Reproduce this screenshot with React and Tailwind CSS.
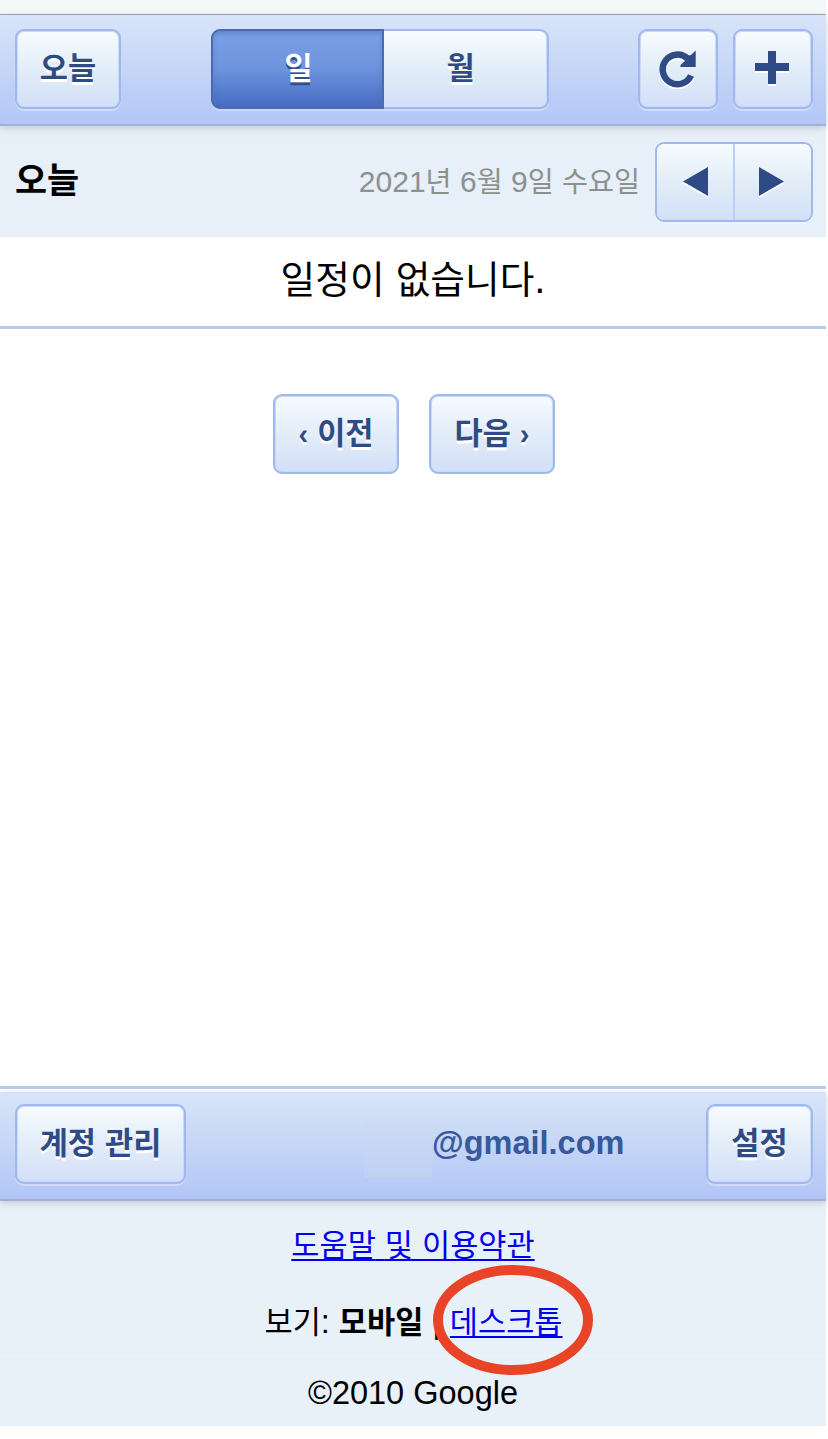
import React from "react";

// Hangul runs are set slightly smaller so they sit evenly beside Latin digits.
function Ko({ children }) {
  return children.split(/([\uac00-\ud7a3]+)/).map((part, i) =>
    /[\uac00-\ud7a3]/.test(part) ? (
      <span key={i} className="text-[0.942em]">{part}</span>
    ) : (
      part
    )
  );
}

const face =
  "flex items-center justify-center bg-linear-to-b from-[#f6fbfe] via-[#e3edf8] to-[#d2dff8]";
const frame =
  "rounded-[9px] border-[2px] border-[#a0b8ee] shadow-[inset_0_0_0_1px_#c9d9f8,0_2px_0_#ffffff55]";
const label =
  "text-[32.5px] leading-[38px] font-bold text-[#2f4b85] whitespace-pre [text-shadow:0_3px_0_#ffffff]";

function Button({ className, children }) {
  return (
    <button className={`${face} ${frame} ${label} h-20 shrink-0 pb-[2px] ${className}`}>
      <span>{children}</span>
    </button>
  );
}

function Bar({ className, children }) {
  return (
    <div
      className={`relative flex border-b-2 border-[#a3b1d9] bg-linear-to-b from-[#d8e4f9] via-[#c5d6f6] to-[#b3c5f7] shadow-[0_2px_7px_#9ba6b080] ${className}`}
    >
      {children}
    </div>
  );
}

export default function App() {
  return (
    <div className="h-[1439px] w-[828px] overflow-hidden bg-white font-['Liberation_Sans','Noto_Sans_CJK_KR',sans-serif] text-black">
      <div className="relative w-[826px]">
        <div className="h-[15px] border-b border-[#92a0b2] bg-[#f3f8f8]" />
        <Bar className="h-[111px] pt-[14px] pl-[15px] pr-[13px]">
          <Button className="w-[106px]"><Ko>오늘</Ko></Button>
          <div className="ml-[90px] flex h-20 w-[338px]">
            <button className="flex w-[173px] items-center justify-center rounded-l-[9px] border-2 border-[#4b6bae] bg-linear-to-b from-[#7ba1e6] via-[#6c93dd] to-[#476bc2] pb-[2px] text-[32.5px] leading-[38px] font-bold text-white shadow-[inset_0_3px_4px_#4e70b488,0_2px_0_#ffffff44] [text-shadow:0_3px_0_#334f8b]">
              <span className="pl-[2px]"><Ko>일</Ko></span>
            </button>
            <button className={`${face} ${label} w-[165px] rounded-r-[9px] border-2 border-l-0 border-[#a0b8ee] pr-[10px] pb-[2px] shadow-[inset_-1px_0_0_#c9d9f8,0_2px_0_#ffffff55]`}>
              <Ko>월</Ko>
            </button>
          </div>
          <Button className="ml-[89px] w-20">
            <svg className="block" width="40" height="42" viewBox="0 0 40 42" fill="none">
              <path d="M33 30.5A14.8 14.8 0 1 1 29.5 13.5" stroke="#fff" strokeWidth="6.5" />
              <path d="M33 28.5A14.8 14.8 0 1 1 29.5 11.5" stroke="#2f4b85" strokeWidth="6.5" />
              <path d="M37.7 3.5V20H22.5V18L27.5 13.5V9.5L33 8Z" fill="#2f4b85" />
            </svg>
          </Button>
          <Button className="ml-[15px] w-20">
            <svg className="mr-[3px] block" width="36" height="38" viewBox="0 0 36 38">
              <path d="M14 4H22V16H35V24H22V37H14V24H1V16H14Z" fill="#fff" />
              <path d="M14 2H22V14H35V22H22V35H14V22H1V14H14Z" fill="#2f4b85" />
            </svg>
          </Button>
        </Bar>

        <div className="flex h-[111px] items-center bg-[#e7eff8] pr-[13px] pl-[15px]">
          <h1 className="pb-[2px] text-[37px] leading-[42px] font-bold"><Ko>오늘</Ko></h1>
          <span className="ml-auto text-[30px] leading-9 whitespace-nowrap text-[#8b918f]">
            <Ko>2021년 6월 9일 수요일</Ko>
          </span>
          <div className={`${frame} ml-[15px] flex h-20 w-[158px] overflow-hidden`}>
            <button className={`${face} w-[78px] border-r-2 border-[#bacdf5]`}>
              <svg width="26" height="32" viewBox="0 0 26 32">
                <path d="M26 3V32L1 17.5Z" fill="#fff" />
                <path d="M26 1V30L1 15.5Z" fill="#2f4b85" />
              </svg>
            </button>
            <button className={`${face} flex-1 pr-[2px]`}>
              <svg width="26" height="32" viewBox="0 0 26 32">
                <path d="M0 3V32L25 17.5Z" fill="#fff" />
                <path d="M0 1V30L25 15.5Z" fill="#2f4b85" />
              </svg>
            </button>
          </div>
        </div>

        <div className="flex h-[92px] items-center justify-center border-b-[3px] border-[#bbcceb] pb-[4px] text-[40px] leading-[46px]">
          <p><Ko>일정이 없습니다.</Ko></p>
        </div>

        <div className="flex h-[757px] justify-center gap-[30px] pt-[65px] pl-[2px]">
          <Button className="w-[126px]"><span className="text-[29px]">‹</span><Ko> 이전</Ko></Button>
          <Button className="w-[126px]"><Ko>다음 </Ko><span className="text-[29px]">›</span></Button>
        </div>

        <footer>
          <div className="h-[6px] border-t-[3px] border-[#bbcceb]" />
          <Bar className="h-[109px] pt-[12px] pl-[15px] pr-[13px]">
            <Button className="w-[171px]"><Ko>계정 관리</Ko></Button>
            <div className="mt-[16px] ml-[178px] h-[58px] w-[68px] bg-linear-to-b from-[#cddbf6] to-[#bfd0f4]" />
            <span className="mt-[20px] text-[32.5px] leading-[38px] font-bold text-[#38599b]">@gmail.com</span>
            <Button className="ml-auto w-[107px]"><Ko>설정</Ko></Button>
          </Bar>
          <div className="flex h-[225px] flex-col items-center bg-[#e8f0f8] text-[32.5px] leading-[38px] whitespace-pre">
            <div className="flex h-[85px] w-full justify-center border-b border-[#edf3f9] pt-[25px]">
              <a className="text-[#0000ee] underline decoration-2 underline-offset-[3px] [text-decoration-skip-ink:none]"><Ko>도움말 및 이용약관</Ko></a>
            </div>
            <div className="flex h-[70px] w-full justify-center border-b border-[#edf3f9] pt-[17px] pl-[1px]">
              <p>
                <Ko>보기: </Ko>
                <b><Ko>모바일</Ko></b> |{" "}
                <a className="text-[#0000ee] underline decoration-2 underline-offset-[3px] [text-decoration-skip-ink:none]"><Ko>데스크톱</Ko></a>
              </p>
            </div>
            <p className="mt-[18px]">©2010 Google</p>
          </div>
        </footer>

        <svg className="absolute top-[1264px] left-[432px]" width="162" height="112" viewBox="0 0 162 112">
          <ellipse cx="81" cy="56" rx="75" ry="50" fill="none" stroke="#e94427" strokeWidth="10" />
        </svg>
      </div>
    </div>
  );
}
